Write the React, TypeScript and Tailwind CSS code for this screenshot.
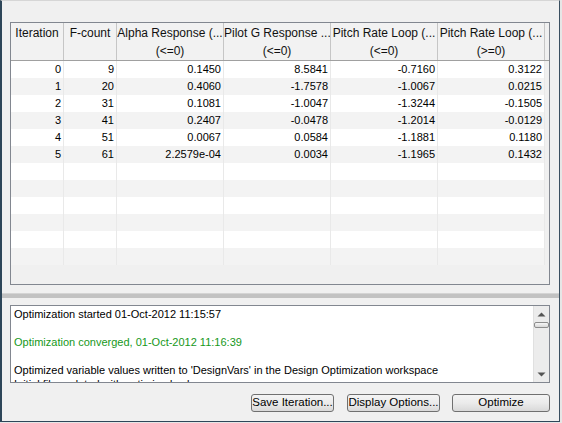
import React from 'react'

const cols = [
    { w: 'w-[53px]', h1: 'Iteration', h2: '' },
    { w: 'w-[53px]', h1: 'F-count', h2: '' },
    { w: 'w-[107px]', h1: 'Alpha Response (...', h2: '(<=0)' },
    { w: 'w-[107px]', h1: 'Pilot G Response ...', h2: '(<=0)' },
    { w: 'w-[107px]', h1: 'Pitch Rate Loop (...', h2: '(<=0)' },
    { w: 'w-[107px]', h1: 'Pitch Rate Loop (...', h2: '(>=0)' },
]

const rows = [
    ['0', '9', '0.1450', '8.5841', '-0.7160', '0.3122'],
    ['1', '20', '0.4060', '-1.7578', '-1.0067', '0.0215'],
    ['2', '31', '0.1081', '-1.0047', '-1.3244', '-0.1505'],
    ['3', '41', '0.2407', '-0.0478', '-1.2014', '-0.0129'],
    ['4', '51', '0.0067', '0.0584', '-1.1881', '0.1180'],
    ['5', '61', '2.2579e-04', '0.0034', '-1.1965', '0.1432'],
    ['', '', '', '', '', ''],
    ['', '', '', '', '', ''],
    ['', '', '', '', '', ''],
    ['', '', '', '', '', ''],
    ['', '', '', '', '', ''],
    ['', '', '', '', '', ''],
]

function Btn({ w, label, cls }: { w: string; label: string; cls?: string }) {
    return (
        <div className={`${w} ${cls ?? ''} h-[18px] flex items-center justify-center whitespace-nowrap rounded-[3px] border border-[#707070] bg-gradient-to-b from-[#f4f4f4] via-[#ebebeb] to-[#d9d9d9] text-[11.5px] leading-none text-black`}>
            {label}
        </div>
    )
}

function App() {
    return (
        <div className='w-[562px] h-[423px] bg-[#e6e6e6] font-["Liberation_Sans",Arial,sans-serif]'>
            <div className='w-[560px] h-[422px] flex flex-col bg-[#f0f0f0] border-t border-t-[#d6d6d6] border-l-2 border-r border-b border-l-[#2e4659] border-r-[#3a4f60] border-b-[#2e4659]'>
                <div className='pl-[8px] pr-[8px] pt-[21px] flex flex-col'>
                    {/* results table */}
                    <div className='w-[540px] h-[263px] border border-[#828790] bg-[#f0f0f0] flex flex-col overflow-hidden'>
                        <div className='flex h-[38px] border-b border-[#a0a0a0]'>
                            {cols.map((c, i) => (
                                <div key={i} className={`${c.w} h-[37px] shrink-0 border-r border-[#c6c6c6] bg-[#f2f2f2] text-center text-[12px] leading-[18px] pt-[1px] text-[#111] whitespace-nowrap overflow-hidden`}>
                                    <div>{c.h1}</div>
                                    <div>{c.h2}</div>
                                </div>
                            ))}
                        </div>
                        {rows.map((r, ri) => (
                            <div key={ri} className={`flex h-[17px] ${ri % 2 === 0 ? 'bg-white' : 'bg-[#f3f3f3]'} w-[534px]`}>
                                {r.map((v, ci) => (
                                    <div key={ci} className={`${cols[ci].w} shrink-0 border-r border-[#e9e9e9] text-right pr-[2px] text-[11px] leading-[17px] text-black`}>
                                        {v}
                                    </div>
                                ))}
                            </div>
                        ))}
                    </div>

                    {/* splitter */}
                    <div className='-ml-[8px] -mr-[8px] mt-[8px] h-[5px] bg-[#c2c2c2] border-t border-[#d4d4d4]'></div>

                    {/* log pane */}
                    <div className='mt-[7px] w-[540px] h-[78px] border border-[#828790] bg-white flex overflow-hidden'>
                        <div className='flex-1 pl-[3px] pt-[1px] text-[11px] leading-[14px] text-black whitespace-nowrap overflow-hidden'>
                            <div>Optimization started 01-Oct-2012 11:15:57</div>
                            <div>&nbsp;</div>
                            <div className='text-[#16981a]'>Optimization converged, 01-Oct-2012 11:16:39</div>
                            <div>&nbsp;</div>
                            <div>Optimized variable values written to 'DesignVars' in the Design Optimization workspace</div>
                            <div>Initial file updated with optimized values.</div>
                        </div>
                        <div className='w-[16px] h-full bg-[#ececec] border-l border-[#e0e0e0] flex flex-col items-center'>
                            <svg width='9' height='5' viewBox='0 0 9 5' className='mt-[6px]'>
                                <path d='M0.5 4.5 L4.5 0.5 L8.5 4.5 Z' fill='#555' />
                            </svg>
                            <div className='mt-[5px] w-[15px] h-[6px] rounded-[2px] border border-[#8d8d8d] bg-gradient-to-b from-[#f7f7f7] to-[#d8d8d8]'></div>
                            <div className='flex-1'></div>
                            <svg width='9' height='5' viewBox='0 0 9 5' className='mb-[5px]'>
                                <path d='M0.5 0.5 L8.5 0.5 L4.5 4.5 Z' fill='#555' />
                            </svg>
                        </div>
                    </div>

                    {/* buttons */}
                    <div className='mt-[11px] w-[540px] flex justify-end'>
                        <Btn w='w-[83px]' label='Save Iteration...' />
                        <Btn w='w-[93px]' label='Display Options...' cls='ml-[13px]' />
                        <Btn w='w-[98px]' label='Optimize' cls='ml-[12px]' />
                    </div>
                </div>
            </div>
        </div>
    )
}

export default App
